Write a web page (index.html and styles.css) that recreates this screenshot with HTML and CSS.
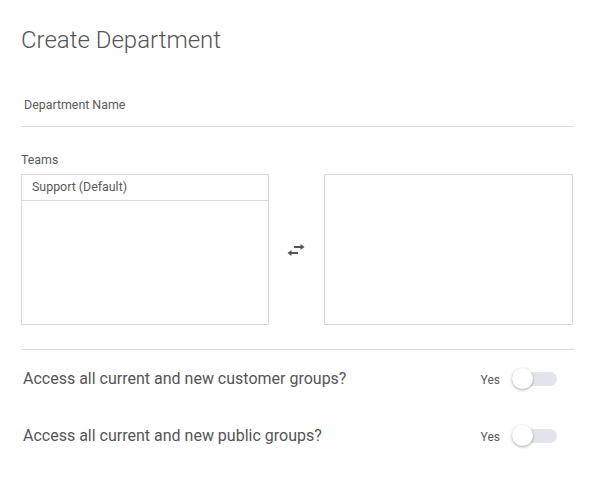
FILE: index.html
```html
<!DOCTYPE html>
<html>
<head>
<meta charset="utf-8">
<link rel="stylesheet" href="styles.css">
</head>
<body>
<div class="page">
  <h1 class="title">Create Department</h1>
  <div class="field">
    <div class="field-label">Department Name</div>
  </div>
  <div class="teams">
    <div class="teams-label">Teams</div>
    <div class="lists">
      <div class="list">
        <div class="list-item">Support (Default)</div>
      </div>
      <div class="swap">
        <svg width="18" height="13" viewBox="0 0 18 13">
          <path d="M7 4H14" stroke="#555" stroke-width="2"/>
          <path d="M13.5 1L17.5 4L13.5 7Z" fill="#555"/>
          <path d="M11 10H4" stroke="#555" stroke-width="2"/>
          <path d="M4.5 7L0.5 10L4.5 13Z" fill="#555"/>
        </svg>
      </div>
      <div class="list"></div>
    </div>
  </div>
  <div class="options">
    <div class="option">
      <div class="option-text">Access all current and new customer groups?</div>
      <div class="toggle-wrap"><span class="yes">Yes</span><span class="toggle"><span class="knob"></span></span></div>
    </div>
    <div class="option">
      <div class="option-text">Access all current and new public groups?</div>
      <div class="toggle-wrap"><span class="yes">Yes</span><span class="toggle"><span class="knob"></span></span></div>
    </div>
  </div>
</div>
</body>
</html>
```
FILE: styles.css
```css
html, body {
  margin: 0;
  padding: 0;
  background: #fff;
}
body {
  font-family: Roboto, "Liberation Sans", sans-serif;
  color: #555;
}
.page {
  width: 553px;
  padding: 0 0 0 21px;
}
.title {
  margin: 0;
  padding-top: 26px;
  font-size: 24px;
  font-weight: 300;
  line-height: 28px;
  color: #555;
}
.field {
  margin-top: 44px;
  border-bottom: 1px solid #ddd;
  padding-bottom: 14px;
}
.field-label {
  padding-left: 3px;
  font-size: 12.4px;
  line-height: 14px;
  color: #5a5a5a;
}
.teams {
  margin-top: 26px;
}
.teams-label {
  font-size: 12.4px;
  line-height: 14px;
  color: #5a5a5a;
}
.lists {
  margin-top: 7px;
  display: flex;
  align-items: stretch;
  width: 552px;
}
.list {
  box-sizing: border-box;
  width: 248px;
  height: 151px;
  border: 1px solid #d9d9d9;
}
.list + .swap + .list {
  width: 249px;
}
.list-item {
  height: 26px;
  box-sizing: border-box;
  border-bottom: 1px solid #d9d9d9;
  padding-left: 10px;
  font-size: 12.4px;
  line-height: 24px;
  color: #5a5a5a;
}
.swap {
  width: 55px;
  display: flex;
  align-items: center;
  justify-content: center;
}
.swap svg {
  margin-left: -2px;
}
.options {
  margin-top: 24px;
  border-top: 1px solid #ddd;
  width: 553px;
}
.option {
  display: flex;
  align-items: center;
  justify-content: space-between;
  height: 57px;
  padding-left: 2px;
}
.option-text {
  font-size: 16px;
  color: #555;
}
.toggle-wrap {
  display: flex;
  align-items: center;
  padding-right: 17px;
}
.yes {
  font-size: 12px;
  color: #5a5a5a;
  margin-right: 12px;
  padding-top: 2px;
}
.toggle {
  position: relative;
  display: block;
  width: 45px;
  height: 14px;
  border-radius: 7px;
  background: #e3e5ec;
}
.knob {
  position: absolute;
  left: 0;
  top: -4px;
  width: 21px;
  height: 21px;
  border-radius: 50%;
  background: #fff;
  box-shadow: 0 1px 3px rgba(0,0,0,0.35);
}
```
